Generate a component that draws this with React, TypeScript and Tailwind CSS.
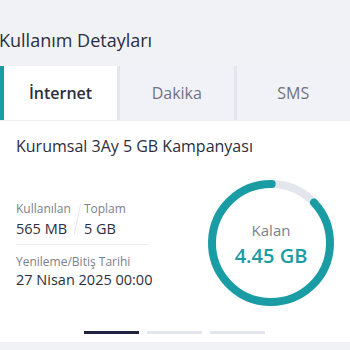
import React from 'react';

const font = { fontFamily: '"Open Sans", "Noto Sans", sans-serif' };

function Ring() {
  const r = 59;
  const c = 2 * Math.PI * r;
  const usedFrac = 0.113;
  const gap = 6;
  const usedLen = c * usedFrac;
  return (
    <div className="relative w-[128px] h-[128px]">
      <svg width="128" height="128" viewBox="0 0 128 128" className="rotate-[-88deg]">
        <circle
          cx="64"
          cy="64"
          r={r}
          fill="none"
          stroke="#e4e6ee"
          strokeWidth="8"
          strokeDasharray={`${usedLen} ${c}`}
        />
        <circle
          cx="64"
          cy="64"
          r={r}
          fill="none"
          stroke="#1a9ca5"
          strokeWidth="8"
          strokeLinecap="round"
          strokeDasharray={`${c - usedLen - gap} ${c}`}
          strokeDashoffset={-(usedLen + gap / 2 + 1)}
        />
      </svg>
      <div className="absolute inset-0 flex flex-col items-center justify-center pt-[2px]">
        <span className="text-[15px] text-[#7d808c] leading-none">Kalan</span>
        <span className="text-[20px] font-semibold text-[#1a9ca5] leading-none mt-[8px]">4.45 GB</span>
      </div>
    </div>
  );
}

export default function App() {
  const tabs = ['İnternet', 'Dakika', 'SMS'];
  return (
    <div className="w-[350px] h-[350px] bg-[#f1f2f6] overflow-hidden" style={font}>
      <div className="h-[66px] flex items-end pb-[17px]">
        <h2 className="text-[18px] text-[#2b2e40] leading-none -ml-[1px]">Kullanım Detayları</h2>
      </div>

      <div className="flex gap-[3px] h-[54px] bg-[#e4e6ee]">
        {tabs.map((t, i) => (
          <div
            key={t}
            className={
              i === 0
                ? 'w-[117px] bg-white border-l-[4px] border-[#1a9ca5] flex items-center justify-center text-[16px] font-semibold text-[#2b2e40]'
                : 'flex-1 bg-[#f0f2f7] flex items-center justify-center text-[16px] text-[#6f7280]'
            }
          >
            {t}
          </div>
        ))}
      </div>

      <div className="bg-white h-[222px] px-4 pt-[17px] border-t border-[#eef0f4]">
        <div className="text-[16px] text-[#2b2e40] leading-none">Kurumsal 3Ay 5 GB Kampanyası</div>

        <div className="flex items-start justify-between mt-[26px]">
          <div className="w-[134px] pt-[23px]">
            <div className="flex items-start">
              <div>
                <div className="text-[12px] text-[#7d808c] leading-none">Kullanılan</div>
                <div className="text-[14.5px] text-[#2b2e40] leading-none mt-[7px]">565 MB</div>
              </div>
              <div className="w-px h-[32px] bg-[#e4e6ee] rotate-[12deg] mx-[6px]" />
              <div>
                <div className="text-[12px] text-[#7d808c] leading-none">Toplam</div>
                <div className="text-[14.5px] text-[#2b2e40] leading-none mt-[7px]">5 GB</div>
              </div>
            </div>
            <div className="h-px bg-[#eceef2] mt-[7px]" />
            <div className="text-[12px] text-[#7d808c] leading-none mt-[11px]">Yenileme/Bitiş Tarihi</div>
            <div className="text-[14.5px] text-[#2b2e40] leading-none mt-[5px] whitespace-nowrap">27 Nisan 2025 00:00</div>
          </div>
          <div className="mr-[-1px] -mt-[1px]">
            <Ring />
          </div>
        </div>

        <div className="flex justify-center gap-[8px] mt-[24px] -ml-[2px]">
          <div className="w-[55px] h-[3px] bg-[#1f2340]" />
          <div className="w-[55px] h-[3px] bg-[#e4e6ee]" />
          <div className="w-[55px] h-[3px] bg-[#e4e6ee]" />
        </div>
      </div>
    </div>
  );
}
